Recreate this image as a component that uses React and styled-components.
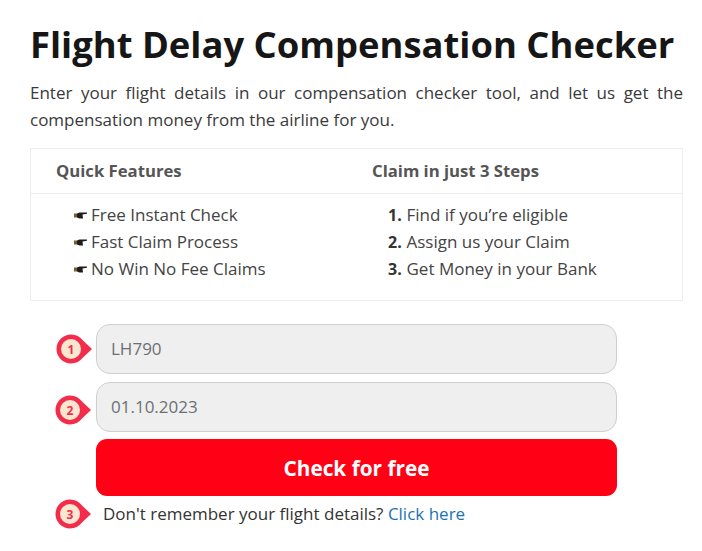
import React from "react";
import styled, { createGlobalStyle } from "styled-components";

const GlobalStyle = createGlobalStyle`
  html, body {
    margin: 0;
    background: #fff;
    font-family: "Open Sans", "DejaVu Sans", sans-serif;
  }
`;

const Page = styled.main`
  width: 702px;
  height: 551px;
  box-sizing: border-box;
  padding: 21px 19px 0 30px;
  color: #333;
  overflow: hidden;
`;

const Title = styled.h1`
  margin: 0;
  font-size: 36.4px;
  line-height: 46px;
  font-weight: 700;
  color: #161616;
  white-space: nowrap;
`;

const Intro = styled.p`
  margin: 12px 0 0;
  font-size: 17px;
  line-height: 27px;
  text-align: justify;
  color: #3a3a3a;
`;

const Features = styled.section`
  margin-top: 15px;
  border: 1px solid #eee;
  display: grid;
  grid-template-columns: 315px 1fr;
  grid-template-rows: 45px 106px;
`;

const Heading = styled.h2`
  margin: 0;
  padding-left: ${props => (props.$first ? "25px" : "26px")};
  font-size: 16.7px;
  line-height: 44px;
  font-weight: 700;
  color: #555;
  border-bottom: 1px solid #eee;
`;

const List = styled.ul`
  margin: 0;
  padding: 7px 0 0 ${props => props.$indent}px;
  list-style: none;
  font-size: 17px;
  line-height: 27px;
  color: #444;
`;

const Item = styled.li`
  display: flex;
  height: 27px;
  align-items: ${props => (props.$numbered ? "baseline" : "center")};
  white-space: nowrap;
`;

const Hand = styled.svg`
  display: block;
  flex: none;
  width: 13px;
  height: 7px;
  margin: 2px 4px 0 0;
`;

const Pointer = () => (
  <Hand viewBox="0 0 13 7">
    <path d="M0 1.500h3v4H0Z" fill="#7a5a2e" />
    <path d="M3 1.500 5.500 .5h7.500v1.200L8.500 2.400 9 6.500H5.500L3 5.500Z" fill="#1c1c1c" />
  </Hand>
);

const Num = styled.b`
  width: 18.5px;
  font-size: 16px;
  line-height: 1;
  font-weight: 700;
  color: #333;
`;

const Form = styled.div`
  margin-top: 23px;
  padding-left: 26px;
  display: grid;
  grid-template-columns: 40px 521px;
  align-items: center;
`;

const Field = styled.div`
  height: 50px;
  box-sizing: border-box;
  margin-bottom: ${props => props.$gap}px;
  padding: 0 0 2px 14px;
  display: flex;
  align-items: center;
  border: 1.5px solid #cfcfcf;
  border-radius: 14px;
  background: #efefef;
  font-size: 17px;
  color: #6c6f73;
`;

const Submit = styled.button`
  grid-column: 2;
  height: 57px;
  border: 0;
  border-radius: 11px;
  background: #ff0015;
  color: #fff;
  font-family: inherit;
  font-size: 20.8px;
  font-weight: 700;
  cursor: pointer;
`;

const Help = styled.p`
  margin: 3px 0 0 7px;
  font-size: 17px;
  line-height: 28px;
  color: #333;
  white-space: nowrap;
`;

const HelpLink = styled.a`
  color: #1a73b8;
  text-decoration: none;
`;

const Pin = styled.svg`
  display: block;
  width: 36px;
  height: 30px;
  margin-top: ${props => props.$shift}px;
  margin-left: ${props => props.$left}px;
`;

const Marker = ({ n, shift, left = 0 }) => (
  <Pin viewBox="0 0 36 30" $shift={shift} $left={left}>
    <path d="M15 .5C20 .5 24 2.800 27 6.500L36 15 27 23.500C24 27.200 20 29.500 15 29.500 7 29.500.5 23 .5 15S7 .5 15 .5Z" fill="#f42c4c" />
    <circle cx="15" cy="15" r="10" fill="#fbe6cf" />
    <text x="15" y="19.500" textAnchor="middle" fontSize="12" fontWeight="700" fontFamily="Open Sans, sans-serif" fill="#f42c4c">{n}</text>
  </Pin>
);

const features = ["Free Instant Check", "Fast Claim Process", "No Win No Fee Claims"];
const steps = ["Find if you’re eligible", "Assign us your Claim", "Get Money in your Bank"];

const App = () => (
  <Page>
    <GlobalStyle />
    <Title>Flight Delay Compensation Checker</Title>
    <Intro>
      Enter your flight details in our compensation checker tool, and let us get the compensation money from the airline for you.
    </Intro>
    <Features>
      <Heading $first>Quick Features</Heading>
      <Heading>Claim in just 3 Steps</Heading>
      <List $indent={43}>
        {features.map(text => (
          <Item key={text}><Pointer />{text}</Item>
        ))}
      </List>
      <List $indent={42}>
        {steps.map((text, i) => (
          <Item key={text} $numbered><Num>{i + 1}.</Num>{text}</Item>
        ))}
      </List>
    </Features>
    <Form>
      <Marker n={1} shift={-8} />
      <Field $gap={8}>LH790</Field>
      <Marker n={2} shift={-2} left={-1} />
      <Field $gap={7}>01.10.2023</Field>
      <Submit type="button">Check for free</Submit>
      <Marker n={3} shift={3} left={-1} />
      <Help>Don't remember your flight details? <HelpLink href="#">Click here</HelpLink></Help>
    </Form>
  </Page>
);

export default App;
